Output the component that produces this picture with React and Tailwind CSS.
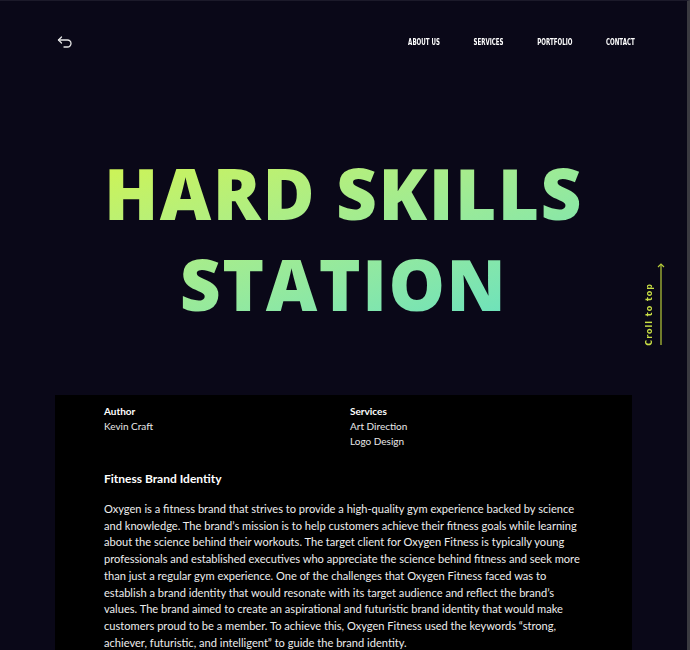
import React from 'react'

const navLinks = ['About us', 'Services', 'Portfolio', 'Contact']

function BackIcon() {
    return (
        <svg width="16" height="12" viewBox="0 0 16 12" fill="none" stroke="#e5e5e5" strokeWidth="1.3" strokeLinecap="round" strokeLinejoin="round">
            <path d="M4.5 1 L1.5 4 L4.5 7" />
            <path d="M1.5 4 H10.5 A3.5 3.5 0 0 1 10.5 11 H7" />
        </svg>
    )
}

function ScrollTop() {
    return (
        <div className="absolute left-[646px] top-[261px] flex items-end gap-[3px]">
            <span
                className="text-[8px] font-bold tracking-[1px] text-[#c9df45] [writing-mode:vertical-rl] rotate-180 leading-none"
                style={{ fontFamily: '"DejaVu Sans", sans-serif' }}
            >
                Croll to top
            </span>
            <svg width="8" height="84" viewBox="0 0 8 84" fill="none" stroke="#b7cc3a" strokeWidth="1.2">
                <path d="M4 2 V83" />
                <path d="M1 5 L4 2 L7 5" />
            </svg>
        </div>
    )
}

export default function App() {
    return (
        <div className="relative w-[690px] h-[650px] overflow-hidden bg-[#0a0818] border-t border-t-[#1c1a2a] border-r-[3px] border-r-[#3a3a40]" style={{ fontFamily: 'Lato, "Noto Sans", sans-serif' }}>
            <header className="flex items-center justify-between pl-[57px] pr-[52px] pt-[34px]">
                <BackIcon />
                <nav className="flex gap-[58px] scale-x-[0.58] origin-right">
                    {navLinks.map((link) => (
                        <a
                            key={link}
                            className="text-[9.5px] font-bold uppercase text-white"
                            style={{ fontFamily: '"DejaVu Sans", sans-serif' }}
                        >
                            {link}
                        </a>
                    ))}
                </nav>
            </header>

            <h1
                className="mt-[98px] text-center text-[71px] font-extrabold leading-[91px] tracking-[1.5px] bg-gradient-to-br from-[#d6f53f] to-[#55dec8] bg-clip-text text-transparent mx-auto w-[540px]"
                style={{ fontFamily: '"Open Sans", sans-serif' }}
            >
                HARD SKILLS
                <br />
                STATION
            </h1>

            <ScrollTop />

            <section className="absolute left-[55px] top-[394px] w-[577px] h-[260px] bg-black px-[49px] pt-[9px] text-white">
                <div className="grid grid-cols-[246px_1fr] text-[10px] leading-[15px]">
                    <div>
                        <div className="font-bold">Author</div>
                        <div className="text-[#e8e8e8]">Kevin Craft</div>
                    </div>
                    <div>
                        <div className="font-bold">Services</div>
                        <div className="text-[#e8e8e8]">Art Direction</div>
                        <div className="text-[#e8e8e8]">Logo Design</div>
                    </div>
                </div>
                <h2 className="mt-[22px] text-[12px] font-bold leading-[16px]">Fitness Brand Identity</h2>
                <p className="mt-[14px] w-[482px] text-[11.1px] leading-[16.7px] text-[#ededed]">
                    Oxygen is a fitness brand that strives to provide a high-quality gym experience backed by science and knowledge. The brand’s mission is to help customers achieve their fitness goals while learning about the science behind their workouts. The target client for Oxygen Fitness is typically young professionals and established executives who appreciate the science behind fitness and seek more than just a regular gym experience. One of the challenges that Oxygen Fitness faced was to establish a brand identity that would resonate with its target audience and reflect the brand’s values. The brand aimed to create an aspirational and futuristic brand identity that would make customers proud to be a member. To achieve this, Oxygen Fitness used the keywords “strong, achiever, futuristic, and intelligent” to guide the brand identity.
                </p>
            </section>
        </div>
    )
}
